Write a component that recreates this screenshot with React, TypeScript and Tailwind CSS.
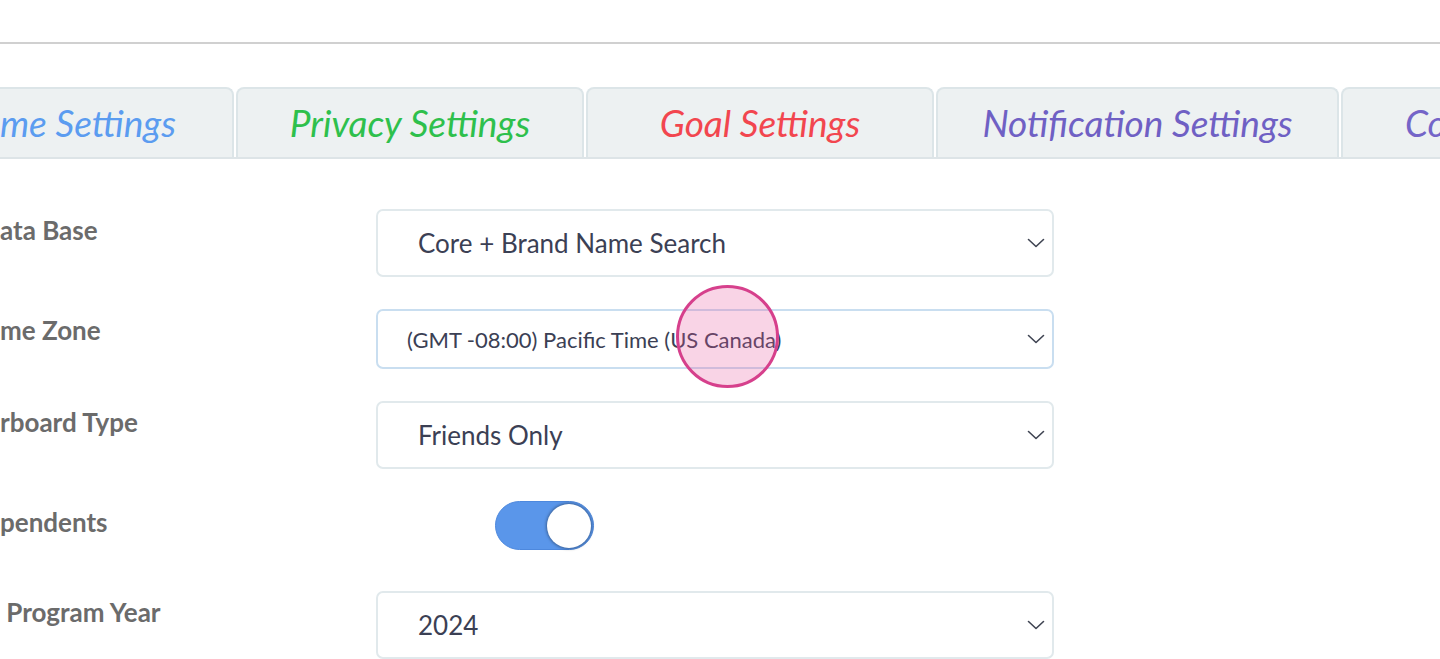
import React from "react";

const tabs = [
  { name: "Home Settings", color: "text-[#5b9cf0]", cls: "w-[348px] justify-end pr-[56px]" },
  { name: "Privacy Settings", color: "text-[#2ec04c]", cls: "w-[348px] justify-center" },
  { name: "Goal Settings", color: "text-[#f2464f]", cls: "w-[348px] justify-center" },
  { name: "Notification Settings", color: "text-[#6f60c4]", cls: "w-[403px] justify-center" },
  { name: "Coach Settings", color: "text-[#7465c8]", cls: "w-[348px] justify-start pl-[62px]" },
];

function Chevron() {
  return (
    <svg width="18" height="10" viewBox="0 0 18 10" fill="none" className="shrink-0">
      <path d="M1.5 1.5L9 8.5L16.5 1.5" stroke="#3f4452" strokeWidth="1.6" strokeLinecap="round" strokeLinejoin="round" />
    </svg>
  );
}

function SelectBox({ value, small }: { value: string; small?: boolean }) {
  return (
    <div
      className={`flex items-center justify-between w-[678px] rounded-[7px] border-2 bg-white pr-[7px] text-[#3b4054] ${
        small
          ? "h-[60px] pl-[29px] text-[22px] border-[#c9def0]"
          : "h-[68px] pl-[40px] text-[26px] border-[#e1e9ec]"
      }`}
    >
      <span>{value}</span>
      <Chevron />
    </div>
  );
}

function Label({ text }: { text: string }) {
  return (
    <div className="w-[376px] shrink-0 pt-[4px] text-[26px] leading-[34px] font-bold text-[#6b6b6b] whitespace-pre">
      {text}
    </div>
  );
}

export default function App() {
  return (
    <div
      className="relative h-[659px] w-full overflow-hidden bg-white"
      style={{ fontFamily: "Lato, 'Noto Sans', sans-serif" }}
    >
      {/* top rule */}
      <div className="h-[44px] border-b-2 border-[#d0d0d0]" />

      {/* Tabs */}
      <div className="mt-[43px] flex gap-[2px] border-b-2 border-[#dde4e7] -ml-[114px]">
        {tabs.map((t) => (
          <div
            key={t.name}
            className={`flex h-[70px] shrink-0 items-center rounded-t-[8px] border-2 border-b-0 border-[#dce5e8] bg-[#edf1f2] ${t.cls}`}
          >
            <span className={`text-[37px] italic whitespace-nowrap ${t.color}`}>{t.name}</span>
          </div>
        ))}
      </div>

      {/* Form */}
      <div className="mt-[50px] flex flex-col gap-8">
        <div className="flex">
          <Label text="ata Base" />
          <SelectBox value="Core + Brand Name Search" />
        </div>
        <div className="flex">
          <Label text="me Zone" />
          <SelectBox value="(GMT -08:00) Pacific Time (US Canada)" small />
        </div>
        <div className="flex">
          <Label text="rboard Type" />
          <SelectBox value="Friends Only" />
        </div>
        <div className="flex h-[58px]">
          <Label text="pendents" />
          <div className="pl-[119px]">
            <button className="flex h-[49px] w-[99px] items-center justify-end rounded-full border border-[#4d88dd] bg-[#5a96ea] pr-[2px]">
              <span className="h-[44px] w-[44px] rounded-full bg-white shadow-[0_0_3px_1px_rgba(0,0,0,0.35)]" />
            </button>
          </div>
        </div>
        <div className="flex">
          <Label text=" Program Year" />
          <SelectBox value="2024" />
        </div>
      </div>

      {/* click marker */}
      <div className="pointer-events-none absolute left-[676px] top-[285px] h-[103px] w-[103px] rounded-full border-[3px] border-[#d6408c] bg-[#e8529a]/25" />
    </div>
  );
}
